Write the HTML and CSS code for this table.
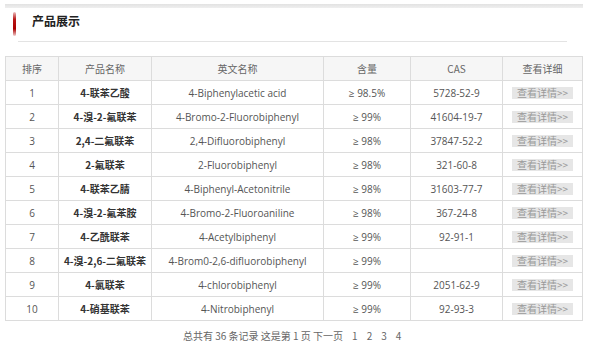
FILE: index.html
```html
<!DOCTYPE html>
<html lang="zh-CN">
<head>
    <meta charset="UTF-8">
    <title>产品展示</title>
    <link rel="stylesheet" href="styles.css">
</head>
<body>
    <div class="page">
        <div class="top-bar"></div>
        <div class="title-row">
            <span class="marker"></span>
            <h2>产品展示</h2>
        </div>

        <table class="products">
            <thead>
                <tr>
                    <th class="c-no">排序</th>
                    <th class="c-cn">产品名称</th>
                    <th class="c-en">英文名称</th>
                    <th class="c-pur">含量</th>
                    <th class="c-cas">CAS</th>
                    <th class="c-btn">查看详细</th>
                </tr>
            </thead>
            <tbody>
                <tr><td>1</td><td class="cn">4-联苯乙酸</td><td>4-Biphenylacetic acid</td><td>≥ 98.5%</td><td>5728-52-9</td><td><a class="more">查看详情&gt;&gt;</a></td></tr>
                <tr><td>2</td><td class="cn">4-溴-2-氟联苯</td><td>4-Bromo-2-Fluorobiphenyl</td><td>≥ 99%</td><td>41604-19-7</td><td><a class="more">查看详情&gt;&gt;</a></td></tr>
                <tr><td>3</td><td class="cn">2,4-二氟联苯</td><td>2,4-Difluorobiphenyl</td><td>≥ 98%</td><td>37847-52-2</td><td><a class="more">查看详情&gt;&gt;</a></td></tr>
                <tr><td>4</td><td class="cn">2-氟联苯</td><td>2-Fluorobiphenyl</td><td>≥ 98%</td><td>321-60-8</td><td><a class="more">查看详情&gt;&gt;</a></td></tr>
                <tr><td>5</td><td class="cn">4-联苯乙腈</td><td>4-Biphenyl-Acetonitrile</td><td>≥ 98%</td><td>31603-77-7</td><td><a class="more">查看详情&gt;&gt;</a></td></tr>
                <tr><td>6</td><td class="cn">4-溴-2-氟苯胺</td><td>4-Bromo-2-Fluoroaniline</td><td>≥ 98%</td><td>367-24-8</td><td><a class="more">查看详情&gt;&gt;</a></td></tr>
                <tr><td>7</td><td class="cn">4-乙酰联苯</td><td>4-Acetylbiphenyl</td><td>≥ 99%</td><td>92-91-1</td><td><a class="more">查看详情&gt;&gt;</a></td></tr>
                <tr><td>8</td><td class="cn">4-溴-2,6-二氟联苯</td><td>4-Brom0-2,6-difluorobiphenyl</td><td>≥ 99%</td><td></td><td><a class="more">查看详情&gt;&gt;</a></td></tr>
                <tr><td>9</td><td class="cn">4-氯联苯</td><td>4-chlorobiphenyl</td><td>≥ 99%</td><td>2051-62-9</td><td><a class="more">查看详情&gt;&gt;</a></td></tr>
                <tr><td>10</td><td class="cn">4-硝基联苯</td><td>4-Nitrobiphenyl</td><td>≥ 99%</td><td>92-93-3</td><td><a class="more">查看详情&gt;&gt;</a></td></tr>
            </tbody>
        </table>

        <div class="pager">
            总共有 36 条记录 这是第 1 页 <a>下一页</a><a class="num">1</a><a class="num">2</a><a class="num">3</a><a class="num">4</a>
        </div>
    </div>
</body>
</html>
```

FILE: styles.css
```css
body {
    margin: 0;
    background: #fff;
    font-family: "Open Sans", "Noto Sans CJK SC", sans-serif;
    font-size: 10px;
    color: #555;
}
.page {
    width: 578px;
    margin: 4px 0 0 5px;
}
.top-bar {
    height: 4px;
    background: linear-gradient(#e2e2e2, #efefef);
}
.title-row {
    display: flex;
    align-items: flex-start;
    height: 33px;
    margin: 0 16px 0 13px;
    border-bottom: 1px solid #e3e3e3;
}
.marker {
    flex: none;
    width: 3px;
    height: 24px;
    margin: 4px 0 0 -5px;
    border-radius: 2px;
    background: linear-gradient(#ecc0c0, #b81818 30%, #a00 70%, #f2d0d0);
}
.title-row h2 {
    margin: 5px 0 0 16px;
    font-family: "Noto Sans CJK SC", sans-serif;
    font-size: 12px;
    line-height: 16px;
    font-weight: bold;
    color: #222;
}
.products {
    width: 578px;
    margin-top: 14px;
    border-collapse: collapse;
    table-layout: fixed;
}
.products th,
.products td {
    border: 1px solid #dcdcdc;
    height: 23px;
    padding: 0;
    text-align: center;
    font-weight: normal;
    white-space: nowrap;
    overflow: hidden;
}
.products th {
    background: #f6f6f6;
    font-family: "Noto Sans CJK SC", sans-serif;
    color: #666;
}
.c-no { width: 52px; }
.c-cn { width: 92px; }
.c-en { width: 171px; }
.c-pur { width: 86px; }
.c-cas { width: 91px; }
.products td.cn {
    font-family: "Noto Sans CJK SC", sans-serif;
    font-weight: bold;
    color: #333;
}
.more {
    display: inline-block;
    width: 61px;
    height: 12px;
    line-height: 12px;
    background: #e6e6e6;
    color: #999;
    font-family: "Noto Sans CJK SC", sans-serif;
    font-size: 10px;
}
.pager {
    margin: 7px 0 0 178px;
    font-family: "Noto Sans CJK SC", sans-serif;
    font-size: 10px;
    color: #666;
}
.pager .num {
    margin-left: 9px;
}
.pager .num:first-of-type {
    margin-left: 11px;
}
```
